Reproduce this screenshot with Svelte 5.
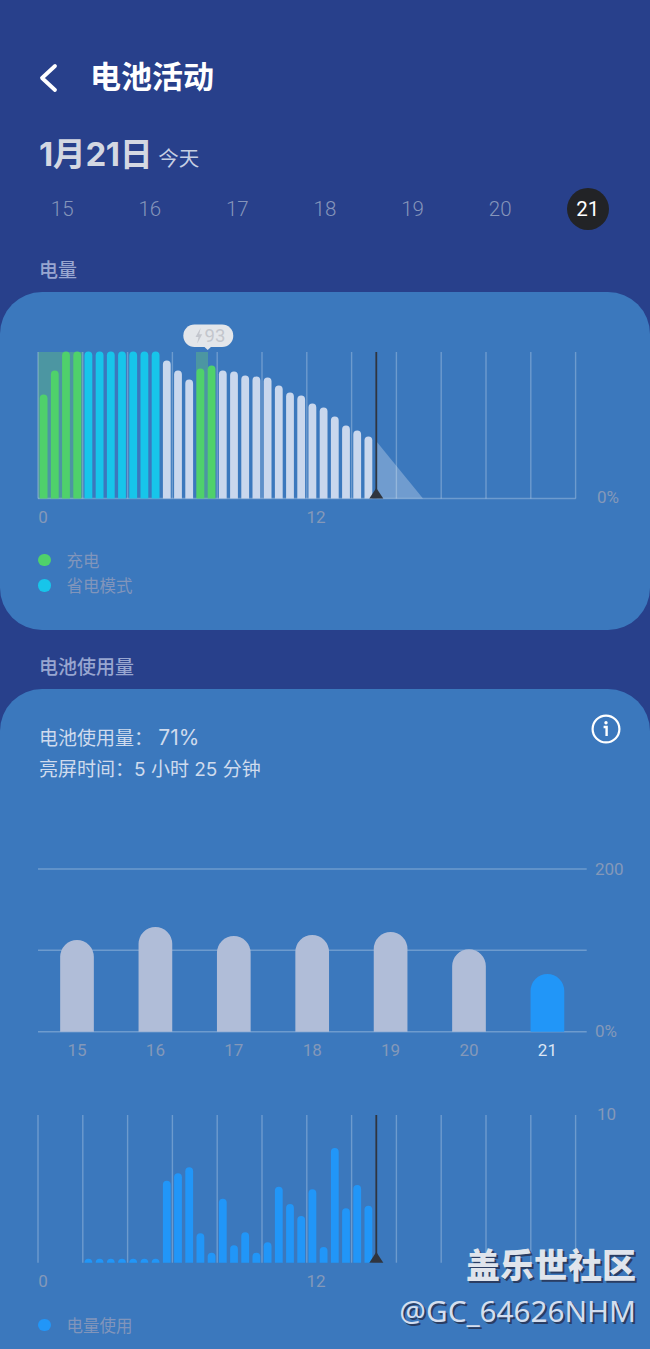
<script>
	const days = [15, 16, 17, 18, 19, 20, 21];
	const slots = Array.from({ length: 13 }, (_, i) => 38 + i * 44.8);

	// half-hourly battery level, bar height in px
	const level = [
		104, 128, 147, 147, 147, 147, 147, 147, 147, 147, 147, 138, 128, 119, 130, 133, 128, 127, 123,
		122, 121, 113, 106, 103, 95, 91, 82, 73, 68, 62
	];
	const usage = [
		0, 0, 0, 0, 4, 2.7, 2.7, 1, 4, 1.4, 4, 82, 89.4, 95.4, 29.4, 10, 64, 17.4, 30.4, 10, 20.4, 76,
		58.7, 46.7, 73.4, 15.7, 114.7, 54.4, 77.7, 57
	];
	const weekly = [91.7, 104.7, 95.7, 96.7, 99.7, 82.4, 57.7];

	const barX = (i) => 43.6 + i * 11.2;

	function levelColor(i) {
		if (i < 4 || i === 14 || i === 15) return '#4fd16b';
		if (i < 11) return '#17c5ea';
		return '#c9d7ed';
	}

	// flat bottom, round top
	function barPath(cx, w, h, base) {
		const r = Math.min(w / 2, h);
		const x = cx - w / 2;
		return `M${x} ${base}V${base - h + r}A${r} ${r} 0 0 1 ${x + w} ${base - h + r}V${base}Z`;
	}
</script>

<div class="page">
	<header class="top">
		<svg class="back" viewBox="0 0 20 30" aria-hidden="true">
			<path d="M17 3 4 15l13 12" />
		</svg>
		<h1>电池活动</h1>
	</header>

	<div class="date"><strong>1月21日</strong><span>今天</span></div>

	<div class="days">
		{#each days as d}
			<span class="day" class:active={d === 21}>{d}</span>
		{/each}
	</div>

	<h2 class="label first">电量</h2>

	<section class="card level-card">
		<svg class="chart" width="650" height="210" viewBox="0 0 650 210">
			<rect x="38" y="32" width="44.6" height="146.5" fill="#4c96a2" />
			<rect x="196" y="32" width="12" height="146.5" fill="#4c96a2" />
			{#each slots as x}
				<line x1={x} x2={x} y1="32" y2="178.5" class="grid" />
			{/each}
			<line x1="38" x2="575.6" y1="178.5" y2="178.5" class="grid" />
			<polygon points="376.7,121.7 423,178.5 376.7,178.5" fill="#fff" opacity="0.27" />
			{#each level as h, i}
				<path d={barPath(barX(i), 7.8, h, 178.5)} fill={levelColor(i)} />
			{/each}
			<line x1="376.3" x2="376.3" y1="32" y2="172" class="now" />
			<polygon points="369.3,178.5 376.3,168 383.3,178.5" fill="#30353f" />

			<rect x="183.3" y="4.5" width="50" height="22.5" rx="11.2" fill="#e3e6ea" />
			<polygon points="204,26.5 211.5,26.5 207.7,30" fill="#e3e6ea" />
			<path d="M200.3 8.5 195.5 17h3l-1.3 6.5 5-9.2h-3l1.4-5.8Z" fill="#c3c6cd" />
			<text x="204.5" y="22" class="tip">93</text>

			<text x="43" y="203" text-anchor="middle" class="axis">0</text>
			<text x="316" y="203" text-anchor="middle" class="axis">12</text>
			<text x="597" y="183" class="axis">0%</text>
		</svg>
		<ul class="legend">
			<li><i style="background:#4fd16b"></i>充电</li>
			<li><i style="background:#17c5ea"></i>省电模式</li>
		</ul>
	</section>

	<h2 class="label second">电池使用量</h2>

	<section class="card usage-card">
		<div class="summary">
			<p>电池使用量： <span class="pct">71%</span><br />亮屏时间：5 小时 25 分钟</p>
			<svg class="info" viewBox="0 0 30 30" aria-hidden="true">
				<circle cx="15" cy="15" r="13.4" fill="none" stroke="#fff" stroke-width="2.2" />
				<circle cx="15" cy="8.8" r="1.7" fill="#fff" />
				<path d="M12.6 13h3v9" fill="none" stroke="#fff" stroke-width="2.4" />
			</svg>
		</div>

		<svg class="chart weekly" width="650" height="210" viewBox="0 0 650 210">
			<line x1="38" x2="586.7" y1="14" y2="14" class="grid" />
			<line x1="38" x2="586.7" y1="95.3" y2="95.3" class="grid" />
			<line x1="38" x2="586.7" y1="176.7" y2="176.7" class="grid" />
			{#each weekly as h, i}
				<path d={barPath(77 + i * 78.4, 33.7, h, 176.7)} fill={i === 6 ? '#2196f8' : '#b0bdd8'} />
				<text
					x={77 + i * 78.4}
					y="200.5"
					text-anchor="middle"
					class="axis"
					class:today={i === 6}>{days[i]}</text
				>
			{/each}
			<text x="595" y="19.5" class="axis">200</text>
			<text x="595" y="181.5" class="axis">0%</text>
		</svg>

		<svg class="chart hourly" width="650" height="195" viewBox="0 0 650 195">
			{#each slots as x}
				<line x1={x} x2={x} y1="15" y2="162.7" class="grid" />
			{/each}
			{#each usage as h, i}
				{#if h > 0}
					<path d={barPath(barX(i), 7.8, h, 162.7)} fill="#2196f8" />
				{/if}
			{/each}
			<line x1="376.3" x2="376.3" y1="15" y2="156" class="now" />
			<polygon points="369.3,162.7 376.3,152 383.3,162.7" fill="#30353f" />
			<text x="597" y="19.5" class="axis">10</text>
			<text x="43" y="187" text-anchor="middle" class="axis">0</text>
			<text x="316" y="187" text-anchor="middle" class="axis">12</text>
		</svg>

		<ul class="legend single">
			<li><i style="background:#2196f8"></i>电量使用</li>
		</ul>
	</section>

	<div class="mark">
		<b>盖乐世社区</b>
		<span>@GC_64626NHM</span>
	</div>
</div>

<style>
	:global(body) {
		margin: 0;
		background: #28408b;
	}

	.page {
		position: relative;
		width: 650px;
		height: 1349px;
		overflow: hidden;
		background: #28408b;
		font-family: Roboto, 'Noto Sans CJK SC', sans-serif;
	}

	.top {
		display: flex;
		align-items: center;
		height: 44px;
		padding: 56px 0 0 38px;
	}

	.back {
		width: 20px;
		height: 30px;
		margin-right: 32px;
	}

	.back path {
		fill: none;
		stroke: #fff;
		stroke-width: 3.8;
		stroke-linecap: round;
		stroke-linejoin: round;
	}

	h1 {
		margin: 0;
		font-size: 31px;
		font-weight: 700;
		line-height: 44px;
		color: #fff;
	}

	.date {
		display: flex;
		align-items: baseline;
		gap: 6px;
		height: 44px;
		margin-top: 32px;
		padding-left: 39px;
		line-height: 44px;
	}

	.date strong {
		font-family: Inter, 'Noto Sans CJK SC', sans-serif;
		font-size: 33px;
		font-weight: 700;
		letter-spacing: -0.4px;
		color: #d4d8e2;
	}

	.date span {
		font-size: 20.5px;
		color: #c6cfe3;
	}

	.days {
		display: grid;
		grid-template-columns: repeat(7, 87.6px);
		height: 42px;
		margin-top: 12px;
		padding-left: 18.4px;
	}

	.day {
		justify-self: center;
		width: 42px;
		line-height: 42px;
		border-radius: 50%;
		text-align: center;
		font-size: 20.5px;
		font-weight: 300;
		color: #8595ba;
	}

	.day.active {
		background: #222326;
		color: #fff;
		font-weight: 400;
	}

	.label {
		margin: 0;
		padding-left: 39px;
		font-size: 19px;
		font-weight: 500;
		line-height: 26px;
		color: #98a6d0;
	}

	.label.first {
		margin-top: 28px;
		height: 34px;
	}

	.label.second {
		margin-top: 25px;
		height: 34px;
	}

	.card {
		background: #3b78bd;
		border-radius: 42px;
	}

	.level-card {
		height: 338px;
		padding-top: 28px;
		box-sizing: border-box;
	}

	.usage-card {
		height: 720px;
		padding-top: 34px;
		box-sizing: border-box;
	}

	.chart {
		display: block;
	}

	.grid {
		stroke: #fff;
		stroke-opacity: 0.26;
		stroke-width: 1.4;
	}

	.now {
		stroke: #30353f;
		stroke-width: 1.8;
	}

	.axis {
		font-size: 17px;
		fill: #8498b9;
	}

	.axis.today {
		fill: #dde6f4;
	}

	.tip {
		font-size: 18.5px;
		fill: #c3c6cd;
	}

	.legend {
		list-style: none;
		margin: 17px 0 0;
		padding: 0 0 0 38px;
	}

	.legend.single {
		margin-top: 17px;
	}

	.legend li {
		display: flex;
		align-items: center;
		height: 25.5px;
		font-size: 16.5px;
		color: #8195bb;
	}

	.legend i {
		width: 12.5px;
		height: 12.5px;
		margin-right: 16px;
		border-radius: 50%;
	}

	.summary {
		display: flex;
		justify-content: space-between;
		align-items: flex-start;
		height: 132px;
		padding: 0 29px 0 39px;
	}

	.summary p {
		margin: 0;
		font-family: Inter, 'Noto Sans CJK SC', sans-serif;
		font-size: 19px;
		line-height: 31px;
		color: #cfdbed;
	}

	.pct {
		font-size: 21px;
		line-height: 1;
	}

	.info {
		width: 30px;
		height: 30px;
		margin-top: -9px;
	}

	.hourly {
		margin-top: 35px;
	}

	.weekly {
		height: 210px;
	}

	.mark {
		position: absolute;
		right: 14px;
		bottom: 16px;
		display: flex;
		flex-direction: column;
		align-items: flex-end;
		color: #dfe4ec;
		text-shadow: 2px 2px 0 #2a3d63;
		font-family: 'Noto Sans', 'Noto Sans CJK SC', sans-serif;
	}

	.mark b {
		font-size: 34px;
		font-weight: 900;
		line-height: 48px;
	}

	.mark span {
		font-size: 29.7px;
		line-height: 44px;
		color: #d4deee;
	}
</style>
